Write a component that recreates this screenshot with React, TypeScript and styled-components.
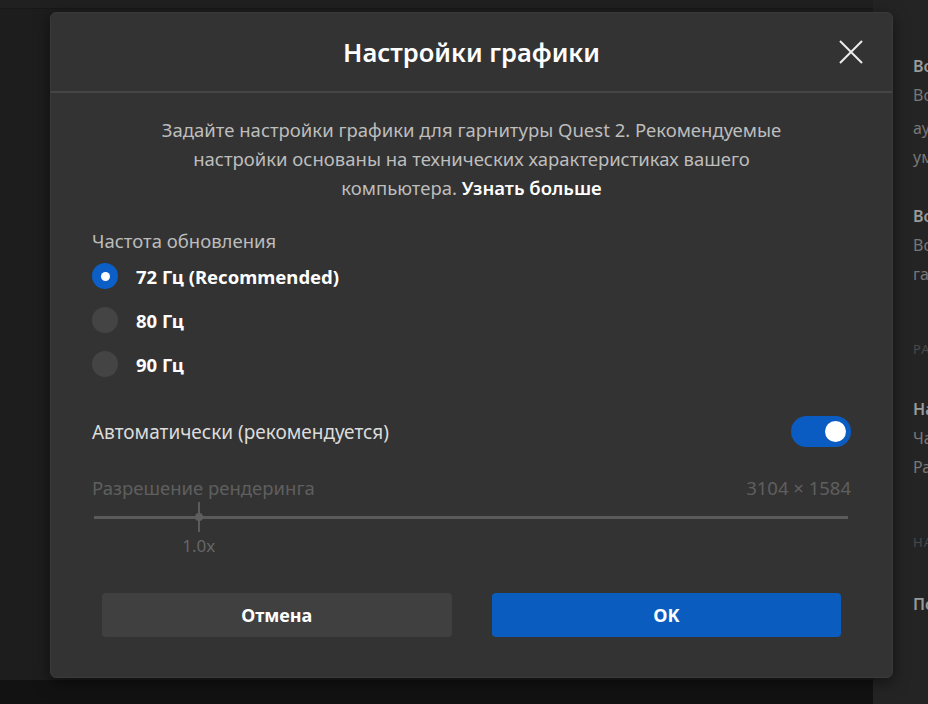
import styled, { createGlobalStyle } from 'styled-components'
import { useState } from 'react'

const GlobalStyle = createGlobalStyle`
  html, body {
    margin: 0;
    padding: 0;
    background: #1c1c1c;
    font-family: "Noto Sans", "Open Sans", sans-serif;
  }
  * { box-sizing: border-box; }
`

const Page = styled.div`
  position: relative;
  display: flex;
  width: 928px;
  height: 704px;
  overflow: hidden;
`

const Backdrop = styled.div`
  flex: 1;
  display: flex;
  flex-direction: column;
  background: #1d1d1d;
  > .top {
    height: 9px;
    background: #202020;
    border-bottom: 1px solid #181818;
  }
  > .fill {
    flex: 1;
  }
  > .bottom {
    height: 24px;
    background: #121212;
  }
`

const SidePanel = styled.div`
  width: 55px;
  background: #242424;
  padding: 52px 0 0 40px;
  overflow: hidden;
  white-space: nowrap;
  font-size: 16px;
  line-height: 29px;
  color: #7a7a7a;
`

const SideItem = styled.div<{ $strong?: boolean; $caps?: boolean; $gap?: number }>`
  margin-top: ${(p) => p.$gap ?? 0}px;
  color: ${(p) => (p.$strong ? '#9a9a9a' : p.$caps ? '#4a4a4a' : '#777')};
  font-weight: ${(p) => (p.$strong ? 600 : 400)};
  font-size: ${(p) => (p.$caps ? 13 : 16)}px;
  letter-spacing: ${(p) => (p.$caps ? '1px' : 0)};
`

const Dialog = styled.div`
  position: absolute;
  left: 50px;
  top: 12px;
  width: 843px;
  height: 666px;
  background: #333333;
  border-radius: 6px;
  border: 1px solid #3a3a3a;
  box-shadow: 0 4px 16px rgba(0, 0, 0, 0.5);
  display: flex;
  flex-direction: column;
`

const Header = styled.div`
  position: relative;
  height: 80px;
  border-bottom: 2px solid #464646;
  display: flex;
  align-items: center;
  justify-content: center;
  > h1 {
    margin: 0;
    font-size: 25.5px;
    font-weight: 600;
    color: #ffffff;
  }
`

const CloseButton = styled.button`
  position: absolute;
  right: 26px;
  top: 24px;
  width: 30px;
  height: 30px;
  padding: 0;
  border: none;
  background: none;
  cursor: pointer;
  display: flex;
  align-items: center;
  justify-content: center;
`

const Body = styled.div`
  flex: 1;
  padding: 22px 41px 0 41px;
  display: flex;
  flex-direction: column;
`

const Description = styled.p`
  margin: 0 auto 27px;
  max-width: 660px;
  text-align: center;
  font-size: 18.5px;
  line-height: 29px;
  color: #bdbdbd;
  > a {
    color: #ffffff;
    font-weight: 600;
    text-decoration: none;
  }
`

const FieldLabel = styled.div<{ $disabled?: boolean }>`
  font-size: 18.5px;
  line-height: 24px;
  color: ${(p) => (p.$disabled ? '#5f5f5f' : '#bcbcbc')};
`

const RadioList = styled.div`
  display: flex;
  flex-direction: column;
  gap: 18px;
  margin-top: 10px;
`

const RadioRow = styled.label`
  display: flex;
  align-items: center;
  gap: 18px;
  cursor: pointer;
  > span {
    font-size: 18.5px;
    font-weight: 700;
    color: #ffffff;
  }
`

const RadioDot = styled.div<{ $checked: boolean }>`
  width: 26px;
  height: 26px;
  border-radius: 50%;
  background: ${(p) => (p.$checked ? '#0b5fc6' : '#444444')};
  display: flex;
  align-items: center;
  justify-content: center;
  &::after {
    content: '';
    width: 9px;
    height: 9px;
    border-radius: 50%;
    background: #ffffff;
    display: ${(p) => (p.$checked ? 'block' : 'none')};
  }
`

const ToggleRow = styled.div`
  display: flex;
  align-items: center;
  justify-content: space-between;
  margin-top: 39px;
  > span {
    font-size: 19px;
    color: #dcdcdc;
  }
`

const Toggle = styled.button<{ $on: boolean }>`
  width: 60px;
  height: 31px;
  border-radius: 16px;
  border: none;
  padding: 0 5px;
  background: ${(p) => (p.$on ? '#0b5cc2' : '#555')};
  display: flex;
  align-items: center;
  justify-content: ${(p) => (p.$on ? 'flex-end' : 'flex-start')};
  cursor: pointer;
  &::after {
    content: '';
    width: 21px;
    height: 21px;
    border-radius: 50%;
    background: #ffffff;
  }
`

const ResolutionRow = styled.div`
  display: flex;
  justify-content: space-between;
  margin-top: 29px;
`

const Slider = styled.div`
  position: relative;
  height: 30px;
  margin: 2px 3px 0 2px;
  display: flex;
  align-items: center;
  > .track {
    flex: 1;
    height: 3px;
    background: #5b5b5b;
  }
`

const Thumb = styled.div`
  position: absolute;
  top: 0;
  width: 10px;
  height: 30px;
  margin-left: -5px;
  &::before {
    content: '';
    position: absolute;
    left: 4px;
    top: 0;
    width: 2px;
    height: 30px;
    background: #5b5b5b;
  }
  &::after {
    content: '';
    position: absolute;
    left: 1px;
    top: 11px;
    width: 8px;
    height: 8px;
    border-radius: 50%;
    background: #5e5e5e;
  }
`

const SliderValue = styled.div`
  position: absolute;
  top: 32px;
  width: 60px;
  margin-left: -30px;
  text-align: center;
  font-size: 17px;
  color: #666666;
`

const Footer = styled.div`
  display: flex;
  gap: 40px;
  padding: 0 51px;
  margin-bottom: 40px;
`

const Button = styled.button<{ $primary?: boolean }>`
  flex: 1;
  height: 44px;
  border: none;
  border-radius: 4px;
  background: ${(p) => (p.$primary ? '#0a5dbf' : '#404040')};
  color: #ffffff;
  font-family: inherit;
  font-size: 18px;
  font-weight: 700;
  cursor: pointer;
`

const rates = ['72 Гц (Recommended)', '80 Гц', '90 Гц']

const App: React.FC = () => {
  const [rate, setRate] = useState(0)
  const [auto, setAuto] = useState(true)
  const thumbPos = 13.9

  return (
    <>
      <GlobalStyle />
      <Page>
        <Backdrop>
          <div className="top" />
          <div className="fill" />
          <div className="bottom" />
        </Backdrop>

        <SidePanel>
          <SideItem $strong>Воспроизведение</SideItem>
          <SideItem>Воспроизводить звук</SideItem>
          <SideItem $gap={4}>аудио на компьютере</SideItem>
          <SideItem>умолчанию</SideItem>
          <SideItem $strong $gap={30}>Воспроизведение</SideItem>
          <SideItem>Воспроизводить</SideItem>
          <SideItem>гарнитуре</SideItem>
          <SideItem $caps $gap={46}>РАЗРАБОТЧИКИ</SideItem>
          <SideItem $strong $gap={31}>Настройки</SideItem>
          <SideItem>Частота</SideItem>
          <SideItem>Разрешение</SideItem>
          <SideItem $caps $gap={46}>НАСТРОЙКИ</SideItem>
          <SideItem $strong $gap={33}>Подробнее</SideItem>
        </SidePanel>

        <Dialog>
          <Header>
            <h1>Настройки графики</h1>
            <CloseButton aria-label="Закрыть">
              <svg width="24" height="24" viewBox="0 0 24 24">
                <path d="M1 1 L23 23 M23 1 L1 23" stroke="#ececec" strokeWidth="2" fill="none" />
              </svg>
            </CloseButton>
          </Header>

          <Body>
            <Description>
              Задайте настройки графики для гарнитуры Quest 2. Рекомендуемые настройки
              основаны на технических характеристиках вашего компьютера.{' '}
              <a href="#">Узнать больше</a>
            </Description>

            <FieldLabel>Частота обновления</FieldLabel>
            <RadioList>
              {rates.map((r, i) => (
                <RadioRow key={r} onClick={() => setRate(i)}>
                  <RadioDot $checked={rate === i} />
                  <span>{r}</span>
                </RadioRow>
              ))}
            </RadioList>

            <ToggleRow>
              <span>Автоматически (рекомендуется)</span>
              <Toggle $on={auto} onClick={() => setAuto(!auto)} />
            </ToggleRow>

            <ResolutionRow>
              <FieldLabel $disabled>Разрешение рендеринга</FieldLabel>
              <FieldLabel $disabled>3104 × 1584</FieldLabel>
            </ResolutionRow>

            <Slider>
              <div className="track" />
              <Thumb style={{ left: `${thumbPos}%` }} />
              <SliderValue style={{ left: `${thumbPos}%` }}>1.0x</SliderValue>
            </Slider>
          </Body>

          <Footer>
            <Button>Отмена</Button>
            <Button $primary>OK</Button>
          </Footer>
        </Dialog>
      </Page>
    </>
  )
}

export default App
